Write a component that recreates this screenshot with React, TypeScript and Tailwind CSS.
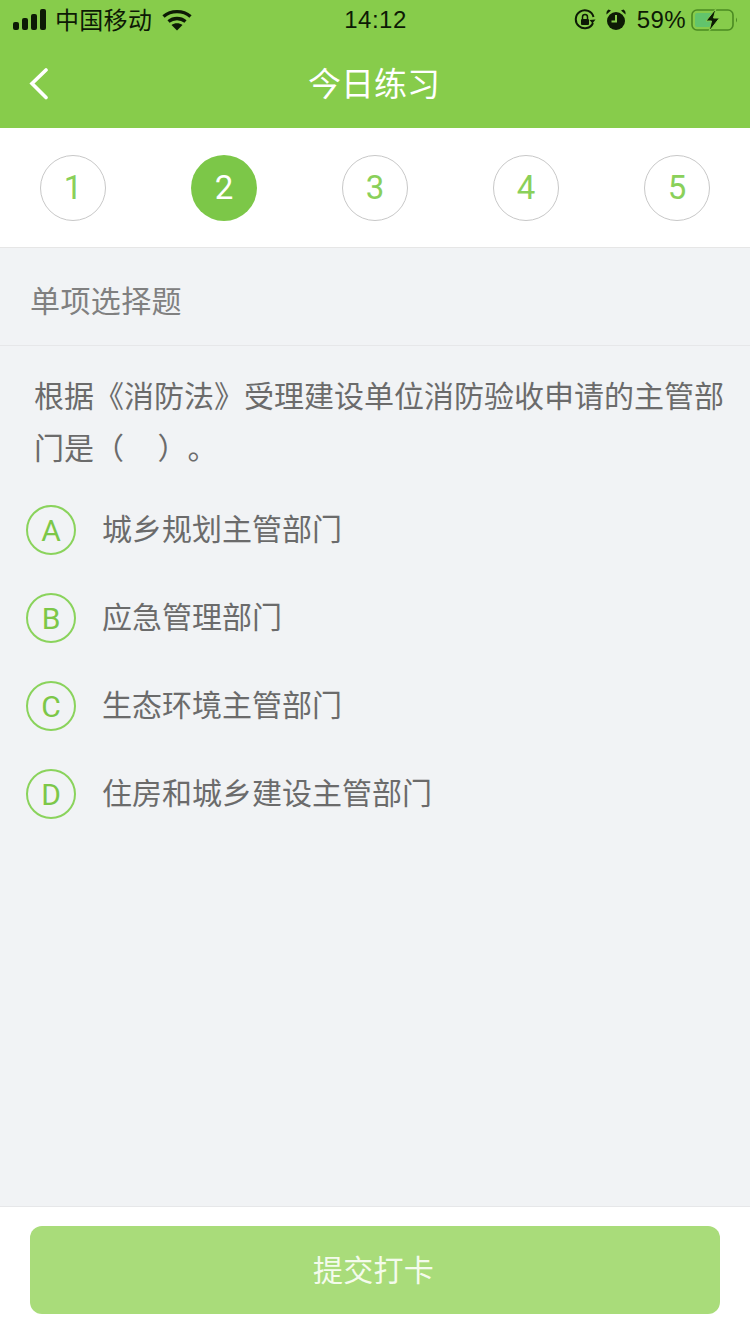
import React from 'react';

const FONT = 'font-["Noto_Sans_CJK_SC","Noto_Sans",sans-serif]';

const steps = [1, 2, 3, 4, 5];

const options = [
  { key: 'A', label: '城乡规划主管部门' },
  { key: 'B', label: '应急管理部门' },
  { key: 'C', label: '生态环境主管部门' },
  { key: 'D', label: '住房和城乡建设主管部门' },
];

const StatusBar: React.FC = () => (
  <div className="h-[40px] flex items-center justify-between pl-[13px] pr-[12px] text-[#0d1a05]">
    <div className="flex items-center w-[200px]">
      <svg width="34" height="22" viewBox="0 0 34 22" fill="currentColor">
        <rect x="0" y="13" width="6" height="8" rx="2" />
        <rect x="9" y="9" width="6" height="12" rx="2" />
        <rect x="18" y="5" width="6" height="16" rx="2" />
        <rect x="27" y="0" width="6" height="21" rx="2" />
      </svg>
      <span className="ml-[8px] text-[24px] leading-[32px] tracking-[0.3px] mt-[-2px]">中国移动</span>
      <svg className="ml-[10px]" width="30" height="22" viewBox="0 0 30 22" fill="none" stroke="currentColor" strokeWidth="3.4">
        <path d="M1.5 7.5C9 1 21 1 28.5 7.5" />
        <path d="M6.5 12.5C11.5 8.5 18.5 8.5 23.5 12.5" />
        <path d="M15 21.5L9.5 16C12.5 13.5 17.5 13.5 20.5 16Z" fill="currentColor" stroke="none" />
      </svg>
    </div>
    <span className="text-[24px] leading-[32px] font-medium font-['Liberation_Sans',sans-serif] tracking-[0.5px]">14:12</span>
    <div className="flex items-center justify-end w-[200px]">
      <svg width="22" height="22" viewBox="0 0 22 22" fill="none" stroke="currentColor" strokeWidth="2">
        <path d="M19 14A9 9 0 1 1 19.5 8" />
        <path d="M21.5 10.5L18.5 14.5L15.5 11" fill="currentColor" stroke="none" />
        <rect x="7" y="10" width="8" height="6" rx="1" fill="currentColor" stroke="none" />
        <path d="M8.5 10V8a2.5 2.5 0 0 1 5 0v2" strokeWidth="1.5" />
      </svg>
      <svg className="ml-[10px]" width="20" height="22" viewBox="0 0 20 22" fill="currentColor">
        <circle cx="10" cy="12" r="9" />
        <path d="M0.5 5.5L5 1.5L2.5 0.5Q0 2 0.5 5.5ZM19.5 5.5L15 1.5L17.5 0.5Q20 2 19.5 5.5Z" />
        <path d="M10 6V12.5H5.5" fill="none" stroke="#86cd4b" strokeWidth="2" />
      </svg>
      <span className="ml-[11px] text-[24px] leading-[32px] font-['Liberation_Sans',sans-serif] tracking-[0.4px]">59%</span>
      <svg className="ml-[5px]" width="47" height="24" viewBox="0 0 47 24" fill="none">
        <rect x="1" y="2" width="41" height="20" rx="5" stroke="#4b8a22" strokeWidth="1.6" />
        <rect x="4" y="5" width="19" height="14" rx="2" fill="#62c46c" />
        <path d="M45 9.5Q47 12 45 14.5Z" fill="#4b8a22" />
        <path d="M25 0.5L15 13H20.5L18 23.5L28.5 10H22.5Z" fill="#0d1a05" stroke="#86cd4b" strokeWidth="1" />
      </svg>
    </div>
  </div>
);

export default function App() {
  return (
    <div className={`w-[750px] h-[1334px] flex flex-col bg-[#f1f3f5] ${FONT}`}>
      {/* Header */}
      <header className="h-[128px] shrink-0 bg-[#87cc4b]">
        <StatusBar />
        <div className="h-[88px] flex items-center justify-center relative">
          <svg className="absolute left-[29px] top-[28px]" width="20" height="32" viewBox="0 0 20 32" fill="none" stroke="#ffffff" strokeWidth="3.6" strokeLinecap="round">
            <path d="M17 2L3 15.5L17 29.5" />
          </svg>
          <h1 className="text-[33px] leading-[44px] text-white mt-[-4px] mr-[2px]">今日练习</h1>
        </div>
      </header>

      {/* Steps */}
      <div className="h-[120px] shrink-0 bg-white border-b border-[#e6e6e6] flex items-center justify-between px-[40px]">
        {steps.map((n) => (
          <div
            key={n}
            className={
              n === 2
                ? "w-[66px] h-[66px] rounded-full bg-[#7cc748] text-white flex items-center justify-center text-[33px] font-['Roboto',sans-serif]"
                : "w-[66px] h-[66px] rounded-full border border-[#c8c8c8] text-[#8ad05a] flex items-center justify-center text-[33px] font-['Roboto',sans-serif]"
            }
          >
            {n}
          </div>
        ))}
      </div>

      {/* Question type */}
      <div className="h-[98px] shrink-0 border-b border-[#e6e7e9] flex items-center pl-[30px] pt-[4px] text-[30px] leading-[40px] tracking-[0.4px] text-[#808080]">
        单项选择题
      </div>

      {/* Question */}
      <main className="flex-1 flex flex-col">
        <p className="pt-[22px] pl-[34px] pr-[20px] text-[30px] leading-[52px] text-[#6b6b6b] [font-feature-settings:'chws'_0] [text-spacing-trim:space-all]">
          根据《消防法》受理建设单位消防验收申请的主管部门是（&nbsp;&nbsp;&nbsp;&nbsp;&nbsp;）。
        </p>
        <div className="mt-[33px] pl-[26px] flex flex-col gap-[38px]">
          {options.map((o) => (
            <div key={o.key} className="flex items-center h-[50px]">
              <div className="w-[50px] h-[50px] rounded-full border-2 border-[#8ad35c] text-[#7cc748] flex items-center justify-center text-[30px] font-['Roboto',sans-serif]">
                {o.key}
              </div>
              <span className="ml-[26px] mt-[-7px] text-[30px] leading-[44px] text-[#6b6b6b]">{o.label}</span>
            </div>
          ))}
        </div>
      </main>

      {/* Footer */}
      <footer className="h-[128px] shrink-0 bg-white border-t border-[#e6e7e9] px-[30px] pt-[19px]">
        <button className="w-full h-[88px] rounded-[12px] bg-[#a9dc7a] text-[#f4fbec] text-[30px] leading-[44px] tracking-[0.3px] pb-[5px] pr-[3px]">
          提交打卡
        </button>
      </footer>
    </div>
  );
}
